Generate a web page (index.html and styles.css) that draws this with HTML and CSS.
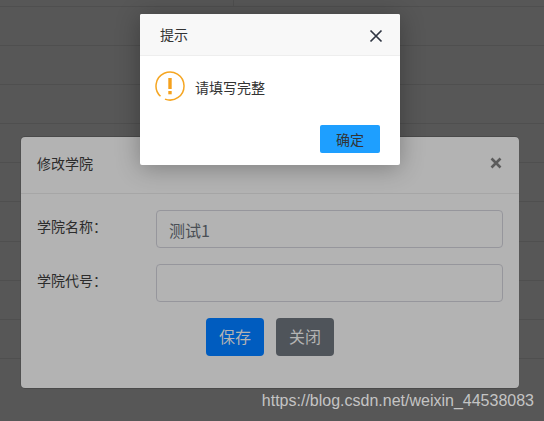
FILE: index.html
```html
<!DOCTYPE html>
<html lang="zh">
<head>
<meta charset="utf-8">
<title>修改学院</title>
<link rel="stylesheet" href="styles.css">
</head>
<body>
<div class="page">
  <div class="rows">
    <div class="row first"></div>
    <div class="row"></div><div class="row"></div><div class="row"></div><div class="row"></div>
    <div class="row"></div><div class="row"></div><div class="row"></div><div class="row"></div><div class="row"></div>
  </div>
  <section class="modal">
    <header class="modal-head">
      <h2 class="modal-title">修改学院</h2>
      <svg class="modal-close" viewBox="0 0 12 12" width="12" height="12"><path d="M1.500 1.500l9 9M10.500 1.500l-9 9"/></svg>
    </header>
    <form class="modal-body">
      <div class="field">
        <label class="field-label">学院名称：</label>
        <div class="input">测试1</div>
      </div>
      <div class="field">
        <label class="field-label">学院代号：</label>
        <div class="input"></div>
      </div>
      <div class="actions">
        <button type="button" class="btn btn-primary">保存</button>
        <button type="button" class="btn btn-secondary">关闭</button>
      </div>
    </form>
  </section>
  <section class="alert">
    <header class="alert-head">
      <span class="alert-title">提示</span>
      <svg class="alert-close" viewBox="0 0 14 14" width="14" height="14"><path d="M1.500 1.500l11 11M12.500 1.500l-11 11"/></svg>
    </header>
    <div class="alert-body">
      <svg class="alert-icon" viewBox="0 0 30 30" width="30" height="30">
        <path class="ring" d="M5.500 25.300A14 14 0 1 1 10 28.100"/>
        <rect class="mark" x="13.300" y="7" width="3.400" height="11"/>
        <rect class="mark" x="13.300" y="20" width="3.400" height="3.300"/>
      </svg>
      <span class="alert-text">请填写完整</span>
    </div>
    <footer class="alert-foot">
      <button type="button" class="alert-btn">确定</button>
    </footer>
  </section>
  <div class="watermark">https://blog.csdn.net/weixin_44538083</div>
</div>
</body>
</html>
```
FILE: styles.css
```css
* { box-sizing: border-box; }
html, body { margin: 0; padding: 0; }
body { font-family: "Noto Sans CJK SC", "Liberation Sans", sans-serif; }
.page { position: relative; width: 544px; height: 421px; overflow: hidden; background: #575757; }
.rows { display: flex; flex-direction: column; }
.row { height: 39.2px; flex: none; border-bottom: 1px solid #4f4f4f; }
.row.first { height: 6.500px; position: relative; }
.row.first::after { content: ""; position: absolute; left: 233px; top: 0; width: 1px; height: 6px; background: #4f4f4f; }

.modal { position: absolute; left: 21px; top: 137px; width: 498px; height: 251px; background: #b3b3b3; border-radius: 4px; box-shadow: 0 0 0 1px #4a4a4a; clip-path: inset(-1px 0 -1px -0.5px round 4px); display: flex; flex-direction: column; }
.modal-head { height: 57px; flex: none; padding: 0 17px 5px 16px; border-bottom: 1px solid #a6a6a6; display: flex; align-items: center; justify-content: space-between; }
.modal-title { margin: 0; font-size: 14px; font-weight: 400; line-height: 20px; color: #2c2c2c; }
.modal-close { fill: none; stroke: #5c5c5c; stroke-width: 2.600; }
.modal-body { padding: 16px 16px 0; display: flex; flex-direction: column; gap: 16px; }
.field { display: flex; align-items: flex-start; }
.field-label { width: 119px; flex: none; font-size: 14px; line-height: 20px; padding-top: 6px; color: #2c2c2c; }
.input { flex: 1; height: 38px; border: 1px solid #96969c; border-radius: 4px; padding: 0 12px; font-size: 16px; line-height: 38px; color: #4a4f55; }
.actions { display: flex; justify-content: center; gap: 12px; }
.btn { width: 58px; height: 38px; border: 0; border-radius: 4px; padding: 0 0 2px; font-family: inherit; font-size: 16px; }
.btn-primary { background: #005cbf; color: #b3b3b3; }
.btn-secondary { background: #4f545a; color: #b3b3b3; }

.alert { position: absolute; left: 140px; top: 14px; width: 260px; height: 151px; background: #fff; border-radius: 2px; box-shadow: 0 3px 24px rgba(0,0,0,.3); display: flex; flex-direction: column; }
.alert-head { height: 42px; flex: none; background: #f8f8f8; border-bottom: 1px solid #eee; border-radius: 2px 2px 0 0; padding: 0 17px 2px 20px; display: flex; align-items: center; justify-content: space-between; }
.alert-title { font-size: 14px; color: #333; }
.alert-close { fill: none; stroke: #2f3542; stroke-width: 1.700; margin-top: 4px; }
.alert-body { height: 69px; flex: none; padding: 15px 15px 0; display: flex; align-items: flex-start; gap: 10px; }
.alert-icon { flex: none; }
.ring { fill: none; stroke: #f5a623; stroke-width: 1.500; }
.mark { fill: #f5a11d; }
.alert-text { font-size: 14px; line-height: 30px; padding-top: 1px; color: #333; }
.alert-foot { padding: 0 20px; display: flex; justify-content: flex-end; }
.alert-btn { width: 60px; height: 28px; border: 0; border-radius: 2px; background: #1e9fff; color: #333; font-family: inherit; font-size: 14px; padding: 0; }

.watermark { position: absolute; right: 10px; top: 391px; font-family: "Liberation Sans", sans-serif; font-size: 16px; line-height: 20px; color: #c4c4c4; white-space: nowrap; }
```
